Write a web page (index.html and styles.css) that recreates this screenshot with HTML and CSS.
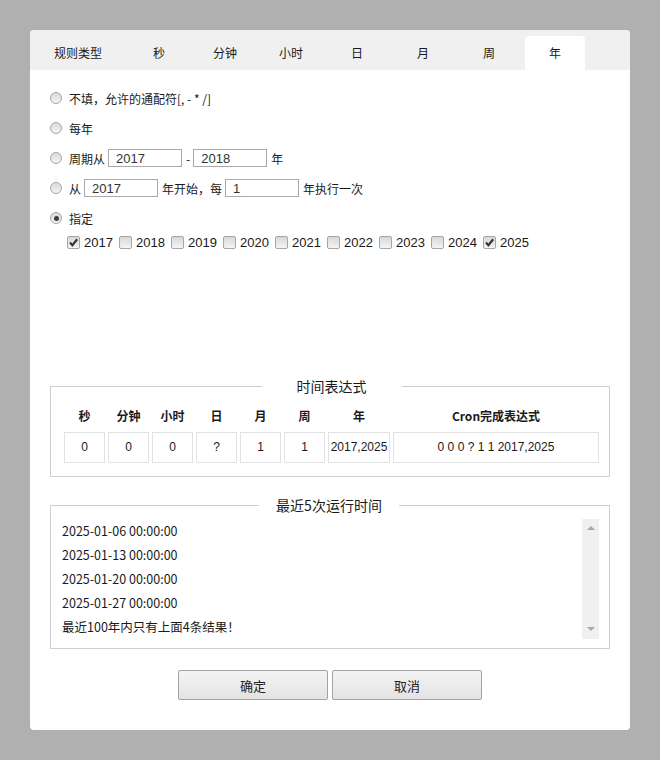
FILE: index.html
```html
<!DOCTYPE html>
<html lang="zh">
<head>
<meta charset="utf-8">
<title>Cron</title>
<link rel="stylesheet" href="styles.css">
</head>
<body>
<div class="panel">
  <div class="tabs">
    <span class="tabs-label">规则类型</span>
    <span class="tab">秒</span>
    <span class="tab">分钟</span>
    <span class="tab">小时</span>
    <span class="tab">日</span>
    <span class="tab">月</span>
    <span class="tab">周</span>
    <span class="tab active">年</span>
  </div>

  <div class="tab-body">
    <div class="row"><span class="radio"></span>不填，允许的通配符[, - * /]</div>
    <div class="row"><span class="radio"></span>每年</div>
    <div class="row"><span class="radio"></span>周期从<input class="num" type="text" value="2017">-<input class="num" type="text" value="2018">年</div>
    <div class="row"><span class="radio"></span>从<input class="num" type="text" value="2017">年开始，每<input class="num" type="text" value="1">年执行一次</div>
    <div class="row"><span class="radio checked"></span>指定</div>
    <div class="checks">
      <span class="check-item"><span class="cbox on"><svg viewBox="0 0 13 13" width="13" height="13"><path d="M3 6.6 L5.4 9.3 L10.2 3.2" fill="none" stroke="#383838" stroke-width="2.2"/></svg></span>2017</span>
      <span class="check-item"><span class="cbox"></span>2018</span>
      <span class="check-item"><span class="cbox"></span>2019</span>
      <span class="check-item"><span class="cbox"></span>2020</span>
      <span class="check-item"><span class="cbox"></span>2021</span>
      <span class="check-item"><span class="cbox"></span>2022</span>
      <span class="check-item"><span class="cbox"></span>2023</span>
      <span class="check-item"><span class="cbox"></span>2024</span>
      <span class="check-item"><span class="cbox on"><svg viewBox="0 0 13 13" width="13" height="13"><path d="M3 6.6 L5.4 9.3 L10.2 3.2" fill="none" stroke="#383838" stroke-width="2.2"/></svg></span>2025</span>
    </div>
  </div>

  <div class="lower">
    <fieldset class="box expr">
      <legend>时间表达式</legend>
      <div class="grid">
        <div class="th">秒</div>
        <div class="th">分钟</div>
        <div class="th">小时</div>
        <div class="th">日</div>
        <div class="th">月</div>
        <div class="th">周</div>
        <div class="th">年</div>
        <div class="th">Cron完成表达式</div>
        <div class="td">0</div>
        <div class="td">0</div>
        <div class="td">0</div>
        <div class="td">?</div>
        <div class="td">1</div>
        <div class="td">1</div>
        <div class="td">2017,2025</div>
        <div class="td">0 0 0 ? 1 1 2017,2025</div>
      </div>
    </fieldset>

    <fieldset class="box runs">
      <legend>最近5次运行时间</legend>
      <div class="run-area">
        <div class="run-list">
          <div>2025-01-06 00:00:00</div>
          <div>2025-01-13 00:00:00</div>
          <div>2025-01-20 00:00:00</div>
          <div>2025-01-27 00:00:00</div>
          <div>最近100年内只有上面4条结果！</div>
        </div>
        <div class="scrollbar">
          <span class="arrow up"></span>
          <span class="arrow down"></span>
        </div>
      </div>
    </fieldset>

    <div class="buttons">
      <button class="btn" type="button">确定</button>
      <button class="btn" type="button">取消</button>
    </div>
  </div>
</div>
</body>
</html>
```
FILE: styles.css
```css
html, body {
  margin: 0;
  padding: 0;
}
body {
  background: #b0b0b0;
  padding: 30px;
  font-family: "Noto Sans CJK SC", "Liberation Sans", sans-serif;
  font-size: 12px;
  color: #1a1a1a;
}
.panel {
  width: 600px;
  height: 700px;
  background: #fff;
  border-radius: 4px;
  overflow: hidden;
}
.tabs {
  height: 40px;
  background: #f0f0f0;
  display: flex;
  align-items: flex-end;
}
.tabs-label {
  width: 48px;
  margin-left: 24px;
  margin-right: 27px;
  line-height: 34px;
  white-space: nowrap;
}
.tab {
  width: 60px;
  height: 34px;
  line-height: 34px;
  text-align: center;
  margin-right: 6px;
  border-radius: 4px 4px 0 0;
}
.tab.active {
  background: #fff;
}
.tab-body {
  height: 300px;
  box-sizing: border-box;
  padding: 13px 20px 0;
}
.row {
  height: 30px;
  display: flex;
  align-items: center;
  white-space: nowrap;
}
.radio {
  width: 12px;
  height: 12px;
  box-sizing: border-box;
  border: 1px solid #a6a6a6;
  border-radius: 50%;
  background: linear-gradient(#d9d9d9, #f4f4f4);
  margin-right: 7px;
  display: flex;
  align-items: center;
  justify-content: center;
}
.radio.checked::after {
  content: "";
  width: 5px;
  height: 5px;
  border-radius: 50%;
  background: #3c3c4a;
}
.num {
  width: 74px;
  height: 18px;
  box-sizing: border-box;
  border: 1px solid #a9a9a9;
  padding: 0 7px;
  margin: 0 4px 0 3px;
  font-family: "Liberation Sans", sans-serif;
  font-size: 13px;
  color: #333;
  outline: none;
}
.checks {
  display: flex;
  align-items: center;
  height: 18px;
  margin-left: 17px;
}
.check-item {
  width: 52px;
  display: flex;
  align-items: center;
  font-family: "Liberation Sans", sans-serif;
  font-size: 13px;
}
.cbox {
  width: 13px;
  height: 13px;
  box-sizing: border-box;
  border: 1px solid #a6a6a6;
  border-radius: 2px;
  background: linear-gradient(#d8d8d8, #f5f5f5);
  margin-right: 4px;
  display: flex;
  align-items: center;
  justify-content: center;
  overflow: hidden;
}
.cbox svg {
  display: block;
  flex: none;
}
.lower {
  padding: 0 20px;
}
.box {
  margin: 0;
  border: 1px solid #cfcfcf;
  min-width: 0;
}
.box legend {
  width: 140px;
  margin: 0 auto;
  padding: 0;
  text-align: center;
  font-size: 14px;
  line-height: 16px;
}
.expr {
  margin-top: 8px;
  padding: 10px 10px 13px 13px;
}
.grid {
  display: grid;
  grid-template-columns: repeat(6, 41px) 62px 1fr;
  grid-template-rows: 24px 31px;
  column-gap: 3px;
  row-gap: 4px;
}
.th {
  font-weight: bold;
  text-align: center;
  line-height: 24px;
  white-space: nowrap;
}
.td {
  border: 1px solid #e2e2e2;
  text-align: center;
  line-height: 29px;
  white-space: nowrap;
  overflow: hidden;
  font-family: "Liberation Sans", sans-serif;
  font-size: 12px;
}
.runs {
  margin-top: 20px;
  padding: 6px 10px 9px 8px;
}
.run-area {
  display: flex;
  height: 120px;
}
.run-list {
  flex: 1;
  padding-left: 3px;
  font-size: 12.5px;
}
.run-list div {
  line-height: 24px;
  height: 24px;
}
.scrollbar {
  width: 17px;
  background: #f0f0f0;
  display: flex;
  flex-direction: column;
  justify-content: space-between;
  align-items: center;
  padding: 7px 0 8px;
  box-sizing: border-box;
}
.arrow {
  width: 0;
  height: 0;
  border-left: 4px solid transparent;
  border-right: 4px solid transparent;
}
.arrow.up {
  border-bottom: 4px solid #a8a8a8;
}
.arrow.down {
  border-top: 4px solid #a8a8a8;
}
.buttons {
  display: flex;
  justify-content: center;
  gap: 4px;
  margin-top: 21px;
}
.btn {
  width: 150px;
  height: 30px;
  box-sizing: border-box;
  border: 1px solid #a3a3a3;
  border-radius: 2px;
  background: linear-gradient(#f4f4f4, #e3e3e3);
  font-family: "Noto Sans CJK SC", sans-serif;
  font-size: 13px;
  color: #222;
  padding: 0;
}
```
